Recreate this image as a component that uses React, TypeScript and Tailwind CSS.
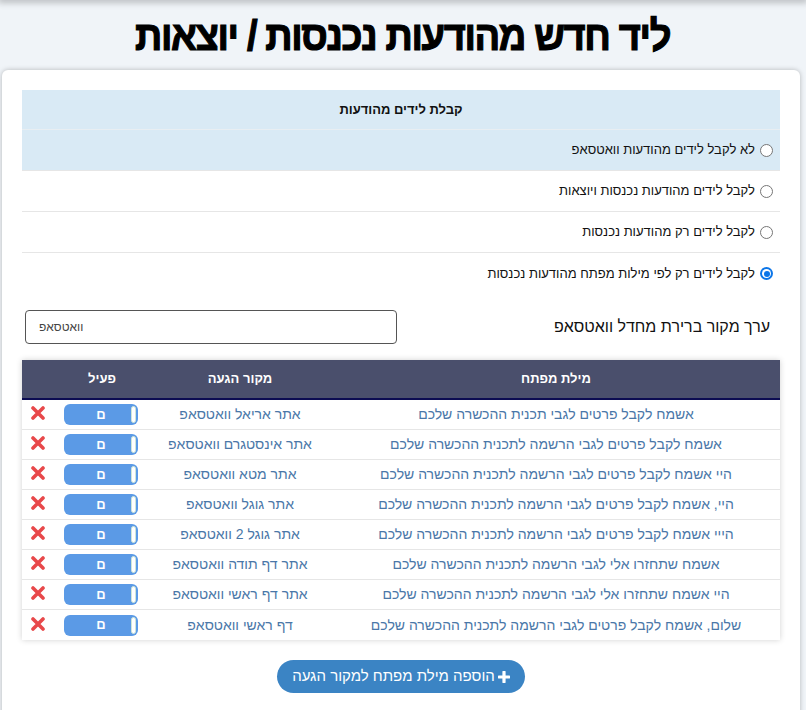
import React from "react";

const rows: [string, string][] = [
  ["אשמח לקבל פרטים לגבי תכנית ההכשרה שלכם", "אתר אריאל וואטסאפ"],
  ["אשמח לקבל פרטים לגבי הרשמה לתכנית ההכשרה שלכם", "אתר אינסטגרם וואטסאפ"],
  ["היי אשמח לקבל פרטים לגבי הרשמה לתכנית ההכשרה שלכם", "אתר מטא וואטסאפ"],
  ["היי, אשמח לקבל פרטים לגבי הרשמה לתכנית ההכשרה שלכם", "אתר גוגל וואטסאפ"],
  ["הייי אשמח לקבל פרטים לגבי הרשמה לתכנית ההכשרה שלכם", "אתר גוגל 2 וואטסאפ"],
  ["אשמח שתחזרו אלי לגבי הרשמה לתכנית ההכשרה שלכם", "אתר דף תודה וואטסאפ"],
  ["היי אשמח שתחזרו אלי לגבי הרשמה לתכנית ההכשרה שלכם", "אתר דף ראשי וואטסאפ"],
  ["שלום, אשמח לקבל פרטים לגבי הרשמה לתכנית ההכשרה שלכם", "דף ראשי וואטסאפ"],
];

const options = [
  { label: "לא לקבל לידים מהודעות וואטסאפ", checked: false, bg: "bg-[#d9eaf5]" },
  { label: "לקבל לידים מהודעות נכנסות ויוצאות", checked: false, bg: "bg-white" },
  { label: "לקבל לידים רק מהודעות נכנסות", checked: false, bg: "bg-white" },
  { label: "לקבל לידים רק לפי מילות מפתח מהודעות נכנסות", checked: true, bg: "bg-white" },
];

function XIcon() {
  return (
    <svg width="14" height="14" viewBox="0 0 14 14">
      <path d="M2 2 L12 12 M12 2 L2 12" stroke="#e8484a" strokeWidth="3.6" strokeLinecap="round" />
    </svg>
  );
}

function Radio({ checked }: { checked: boolean }) {
  return checked ? (
    <span className="w-[13px] h-[13px] rounded-full bg-[#0b75e8] flex items-center justify-center shrink-0">
      <span className="w-[9px] h-[9px] rounded-full bg-white flex items-center justify-center">
        <span className="w-[6px] h-[6px] rounded-full bg-[#0b75e8]" />
      </span>
    </span>
  ) : (
    <span className="w-[13px] h-[13px] rounded-full border border-[#767676] bg-white shrink-0" />
  );
}

export default function App() {
  return (
    <div
      className="min-h-[710px] bg-[#f0f4f8] relative"
      style={{ fontFamily: '"Liberation Sans", Arial, sans-serif' }}
    >
      <div className="absolute left-0 right-0 -top-[4px] h-[4px] bg-white shadow-[0_1px_6px_2px_rgba(0,0,0,0.22)]" />
      <div className="h-[70px] flex items-center justify-center pt-[1px]">
        <h1 dir="rtl" className="text-[42px] font-bold text-black tracking-[-1.5px] leading-none scale-x-[0.905] [-webkit-text-stroke:1.2px_black]">
          ליד חדש מהודעות נכנסות / יוצאות
        </h1>
      </div>
      <div className="mx-[2px] mr-[6px] bg-white rounded-[6px] shadow-[0_0_5px_rgba(0,0,0,0.25)] px-[20px] pt-[20px] pb-[30px]">
        {/* options */}
        <div dir="rtl" className="text-[13px] text-[#111]">
          <div className="h-[40px] bg-[#d9eaf5] flex items-center justify-center font-bold border-b border-[#e8eef2]">
            קבלת לידים מהודעות
          </div>
          {options.map((o, i) => (
            <div
              key={i}
              className={`h-[41px] flex items-center gap-[5px] pr-[7px] ${o.bg} ${i < 3 ? "border-b border-[#e6e6e6]" : ""}`}
            >
              <Radio checked={o.checked} />
              <span>{o.label}</span>
            </div>
          ))}
        </div>

        {/* default source */}
        <div dir="rtl" className="flex items-center mt-[16px] h-[34px]">
          <div className="flex-1 pr-[10px] text-[16px] text-[#111]">ערך מקור ברירת מחדל וואטסאפ</div>
          <div dir="ltr" className="w-[372px] h-[34px] ml-[3px] border border-[#555] rounded-[4px] flex items-center px-[13px] text-[12px] text-[#444]">
            וואטסאפ
          </div>
        </div>

        {/* table */}
        <div className="mt-[16px] shadow-[0_0_6px_rgba(0,0,0,0.18)]">
          <div className="h-[40px] bg-[#4a4f6c] border-b-[2px] border-[#0c0c52] grid grid-cols-[30px_96px_184px_1fr] items-center text-white font-bold text-[13px]">
            <div />
            <div className="text-center pl-[4px]">פעיל</div>
            <div className="text-center">מקור הגעה</div>
            <div className="text-center">מילת מפתח</div>
          </div>
          {rows.map(([kw, src], i) => (
            <div
              key={i}
              className={`h-[30px] grid grid-cols-[30px_96px_184px_1fr] items-center text-[14px] text-[#4a77a8] ${i < rows.length - 1 ? "border-b border-[#e6e6e6]" : ""}`}
            >
              <div className="flex justify-center -mt-[3px] pl-[2px]">
                <XIcon />
              </div>
              <div className="flex justify-center pl-[2px]">
                <div className="relative w-[74px] h-[21px] rounded-[6px] bg-[#5b9ae6] flex items-center justify-center text-white font-bold text-[13px]">
                  ם
                  <span className="absolute right-[2px] top-[2px] w-[5px] h-[17px] rounded-full bg-white border border-[#cfe6d8]" />
                </div>
              </div>
              <div dir="rtl" className="text-center whitespace-nowrap">{src}</div>
              <div dir="rtl" className="text-center whitespace-nowrap">{kw}</div>
            </div>
          ))}
        </div>

        {/* button */}
        <div className="flex justify-center mt-[20px]">
          <button dir="rtl" className="h-[33px] w-[248px] rounded-full bg-[#3b84c4] text-white text-[15px] flex items-center justify-center gap-[3px]">
            <svg width="12" height="12" viewBox="0 0 12 12">
              <path d="M6 1 V11 M1 6 H11" stroke="white" strokeWidth="3.2" strokeLinecap="round" />
            </svg>
            <span>הוספה מילת מפתח למקור הגעה</span>
          </button>
        </div>
      </div>
    </div>
  );
}
